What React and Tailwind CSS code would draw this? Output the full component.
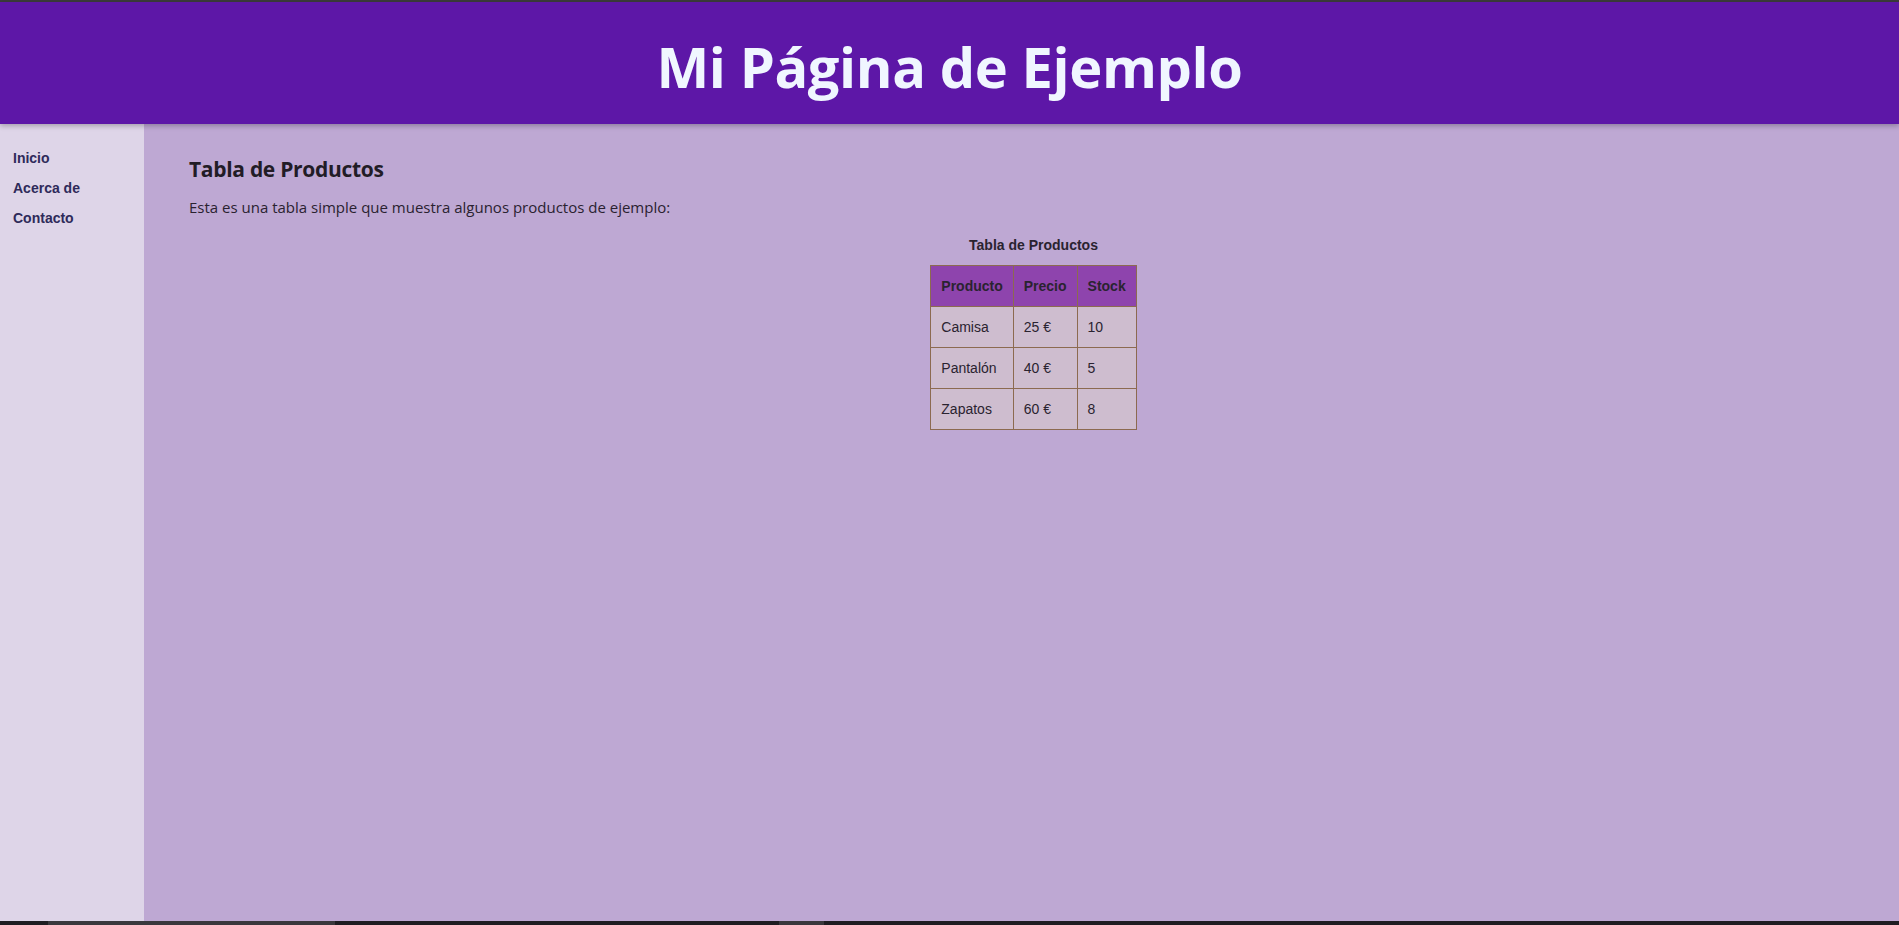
import React from "react";

const rows = [
  ["Camisa", "25 €", "10"],
  ["Pantalón", "40 €", "5"],
  ["Zapatos", "60 €", "8"],
];

export default function App() {
  return (
    <div className="h-screen w-full flex flex-col overflow-hidden bg-[#bea8d3]">
      <div className="h-[2px] bg-[#3b3b3b] shrink-0" />
      <header className="relative z-10 h-[122px] shrink-0 bg-[#5d17a7] flex items-center justify-center shadow-[0_2px_5px_rgba(0,0,0,0.25)]">
        <h1 className="text-[56px] font-bold text-[#f0f6ff] tracking-[-0.4px] leading-none pt-[6px]" style={{ fontFamily: '"Open Sans", "Noto Sans", sans-serif' }}>
          Mi Página de Ejemplo
        </h1>
      </header>
      <div className="flex flex-1 min-h-0">
        <nav className="w-[144px] shrink-0 bg-[#ded5e8] pt-[26px] pl-[13px]" style={{ fontFamily: '"Liberation Sans", Arial, sans-serif' }}>
          <ul className="flex flex-col gap-[14px] text-[14px] font-bold text-[#2e2a5a] leading-[16px]">
            <li>Inicio</li>
            <li>Acerca de</li>
            <li>Contacto</li>
          </ul>
        </nav>
        <main className="flex-1 pl-[45px] pr-[21px] pt-[31px]">
          <h2 className="text-[21px] font-bold text-[#221c26] leading-[28px] tracking-[-0.3px]" style={{ fontFamily: '"Open Sans", "Noto Sans", sans-serif' }}>
            Tabla de Productos
          </h2>
          <p className="mt-[14px] text-[15px] text-[#2a2230] leading-[20px]" style={{ fontFamily: '"Open Sans", "Noto Sans", sans-serif' }}>
            Esta es una tabla simple que muestra algunos productos de ejemplo:
          </p>
          <div className="flex justify-center mt-[20px]" style={{ fontFamily: '"Liberation Sans", Arial, sans-serif' }}>
            <table className="border-collapse text-[14px] leading-[16px] text-[#2a2330]">
              <caption className="font-bold text-[#2a2330] pb-[12px]">Tabla de Productos</caption>
              <thead>
                <tr className="bg-[#8e44ad]">
                  <th className="border border-[#8c6a50] px-[10px] py-[12px] text-left font-bold">Producto</th>
                  <th className="border border-[#8c6a50] px-[10px] py-[12px] text-left font-bold">Precio</th>
                  <th className="border border-[#8c6a50] px-[10px] py-[12px] text-left font-bold">Stock</th>
                </tr>
              </thead>
              <tbody>
                {rows.map((r) => (
                  <tr key={r[0]} className="bg-[#cebdcf]">
                    <td className="border border-[#8c6a50] px-[10px] py-[12px]">{r[0]}</td>
                    <td className="border border-[#8c6a50] px-[10px] py-[12px]">{r[1]}</td>
                    <td className="border border-[#8c6a50] px-[10px] py-[12px]">{r[2]}</td>
                  </tr>
                ))}
              </tbody>
            </table>
          </div>
        </main>
      </div>
      <div className="h-[4px] shrink-0 bg-[#1f1d22] flex">
        <div className="ml-[48px] w-[287px] bg-[#3a383d]" />
        <div className="ml-[444px] w-[45px] bg-[#3a383d]" />
      </div>
    </div>
  );
}
